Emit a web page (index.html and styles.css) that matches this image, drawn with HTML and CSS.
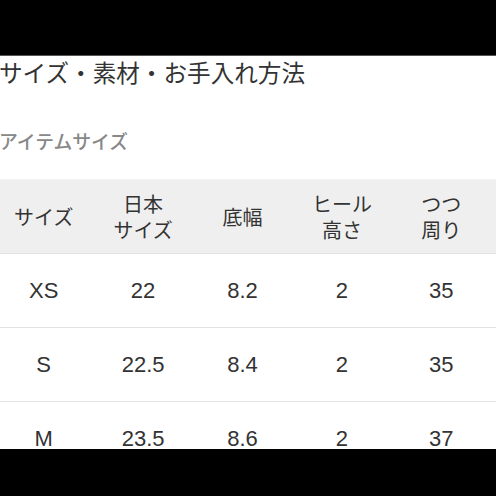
FILE: index.html
```html
<!DOCTYPE html>
<html lang="ja">
<head>
<meta charset="utf-8">
<link rel="stylesheet" href="styles.css">
</head>
<body>
<div class="topbar"></div>
<main class="content">
  <h1 class="title">サイズ・素材・お手入れ方法</h1>
  <h2 class="subtitle">アイテムサイズ</h2>
  <div class="table">
    <div class="row head">
      <div class="cell"><span class="line">サイズ</span></div>
      <div class="cell"><span class="line">日本</span><span class="line">サイズ</span></div>
      <div class="cell"><span class="line">底幅</span></div>
      <div class="cell"><span class="line">ヒール</span><span class="line">高さ</span></div>
      <div class="cell"><span class="line">つつ</span><span class="line">周り</span></div>
    </div>
    <div class="row">
      <div class="cell">XS</div>
      <div class="cell">22</div>
      <div class="cell">8.2</div>
      <div class="cell">2</div>
      <div class="cell">35</div>
    </div>
    <div class="row">
      <div class="cell">S</div>
      <div class="cell">22.5</div>
      <div class="cell">8.4</div>
      <div class="cell">2</div>
      <div class="cell">35</div>
    </div>
    <div class="row">
      <div class="cell">M</div>
      <div class="cell">23.5</div>
      <div class="cell">8.6</div>
      <div class="cell">2</div>
      <div class="cell">37</div>
    </div>
  </div>
</main>
<div class="bottombar"></div>
</body>
</html>
```

FILE: styles.css
```css
html, body {
  margin: 0;
  padding: 0;
  background: #fff;
  overflow: hidden;
  width: 496px;
  height: 496px;
}
body {
  font-family: "Noto Sans CJK JP", "Noto Sans", sans-serif;
  color: #333;
}
.topbar {
  height: 55px;
  background: #000;
  border-bottom: 1px solid #555;
}
.content {
  display: flex;
  flex-direction: column;
}
.title {
  margin: 0 0 0 -1px;
  padding-top: 1px;
  font-size: 23.6px;
  font-weight: 400;
  line-height: 30px;
  color: #333;
}
.subtitle {
  margin: 42px 0 0 -1px;
  font-size: 18.8px;
  font-weight: 500;
  line-height: 24px;
  color: #888;
}
.table {
  margin-top: 26px;
  display: flex;
  flex-direction: column;
}
.row {
  display: grid;
  grid-template-columns: repeat(5, 1fr);
  margin-left: -6px;
  padding-right: 5px;
  height: 73px;
  border-bottom: 1px solid #e2e2e2;
  align-items: center;
}
.row.head {
  background: #efefef;
  border-top: 1px solid #f4f4f4;
}
.cell {
  display: flex;
  flex-direction: column;
  align-items: center;
  text-align: center;
  font-size: 22px;
  line-height: 26px;
  font-family: "Liberation Sans", "Noto Sans CJK JP", sans-serif;
  color: #333;
}
.head .cell {
  font-family: "Noto Sans CJK JP", sans-serif;
  font-size: 20px;
  line-height: 20px;
  gap: 6px;
}
.line {
  display: block;
}
.bottombar {
  position: fixed;
  left: 0;
  right: 0;
  bottom: 0;
  height: 47px;
  background: #000;
}
```
